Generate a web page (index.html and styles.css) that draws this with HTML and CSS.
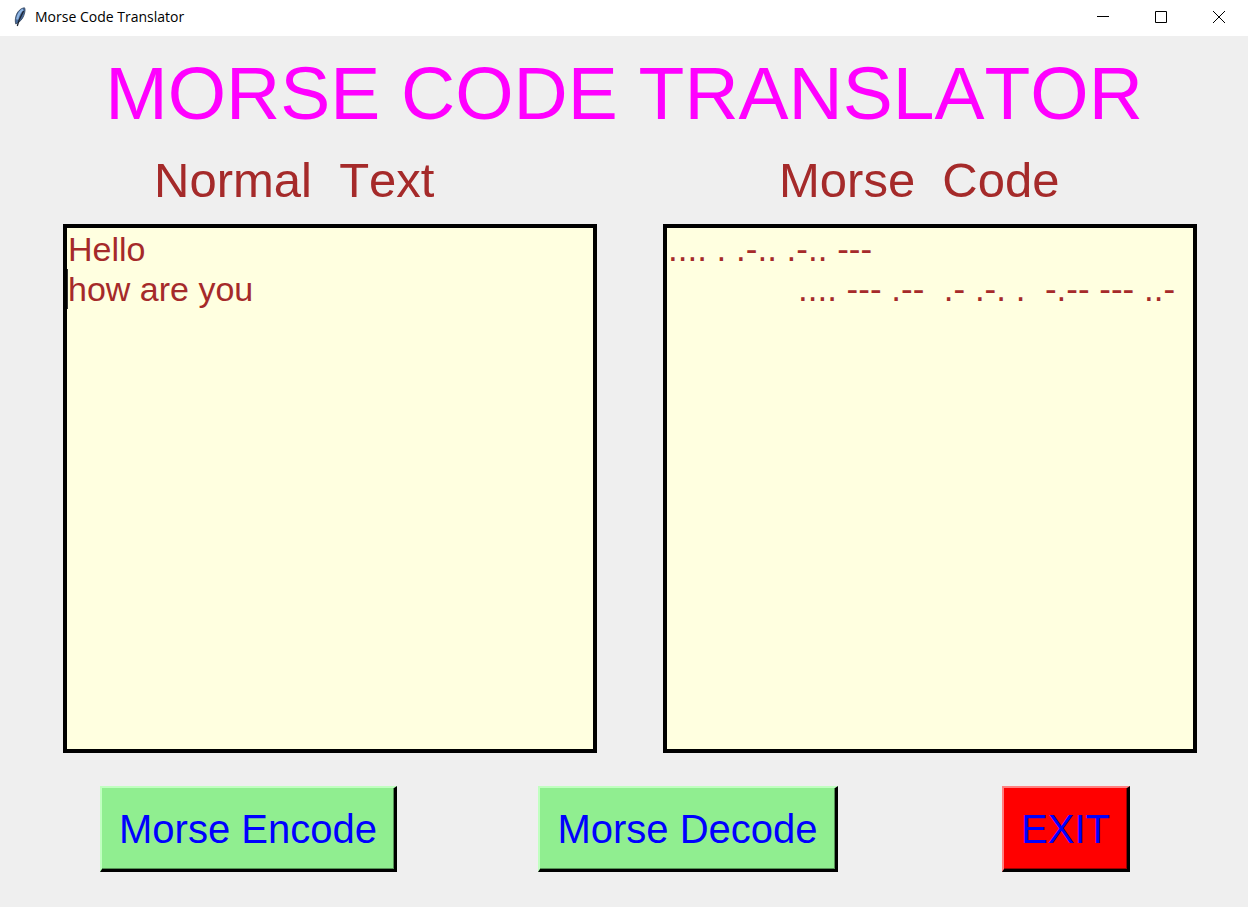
FILE: index.html
```html
<!DOCTYPE html>
<html lang="en">
<head>
<meta charset="utf-8">
<title>Morse Code Translator</title>
<link rel="stylesheet" href="styles.css">
</head>
<body>
<header class="titlebar">
  <svg class="app-icon" viewBox="0 0 14 20" aria-hidden="true">
    <path d="M11.500 .8C8 1 4.200 4.500 3 9C2.200 12 2 14.500 2.800 17L5.500 15.500C9 13 10.800 9.500 11.600 6C12.200 3.500 12.200 2 11.500 .8Z" fill="#47699a" stroke="#2f4058" stroke-width="0.8"/>
    <path d="M10 2.500C7 4.500 5 8 4.200 12.500" fill="none" stroke="#8fb5e2" stroke-width="2.200"/>
    <path d="M10.600 4C8.500 8 5.800 12 4.300 19" fill="none" stroke="#1d2430" stroke-width="1.200"/>
  </svg>
  <span class="window-title">Morse Code Translator</span>
  <button class="window-button" type="button" aria-label="Minimize"><svg viewBox="0 0 12 12"><path d="M0 5.500H12"/></svg></button>
  <button class="window-button" type="button" aria-label="Maximize"><svg viewBox="0 0 12 12"><path d="M.5 .5H11.500V11.500H.5Z"/></svg></button>
  <button class="window-button" type="button" aria-label="Close"><svg viewBox="0 0 12 12"><path d="M0 0L12 12M12 0L0 12"/></svg></button>
</header>
<main class="content">
  <h1 class="heading">MORSE CODE TRANSLATOR</h1>
  <div class="panels">
    <section class="panel">
      <label class="panel-label label-normal" for="normal">Normal  Text</label>
      <div class="field">
        <textarea class="box" id="normal" spellcheck="false">Hello
how are you</textarea>
        <span class="caret"></span>
      </div>
    </section>
    <section class="panel">
      <label class="panel-label label-morse" for="morse">Morse  Code</label>
      <div class="field">
        <textarea class="box box-morse" id="morse" spellcheck="false">.... . .-.. .-.. ---
&#9;.... --- .--  .- .-. .  -.-- --- ..-</textarea>
      </div>
    </section>
  </div>
  <div class="actions">
    <button class="action" type="button">Morse Encode</button>
    <span></span>
    <button class="action" type="button">Morse Decode</button>
    <span></span>
    <button class="action action-exit" type="button">EXIT</button>
  </div>
</main>
</body>
</html>
```
FILE: styles.css
```css
* { box-sizing: border-box; }

body {
  margin: 0;
  min-height: 100vh;
  display: flex;
  flex-direction: column;
  background: #efefef;
  font-family: "Liberation Sans", Arial, sans-serif;
  font-kerning: none;
}

.titlebar {
  display: flex;
  align-items: center;
  height: 36px;
  padding: 0 0 2px 13px;
  background: #fff;
}

.app-icon { width: 14px; height: 20px; }

.window-title {
  flex: 1;
  margin-left: 8px;
  padding-bottom: 2px;
  font: 14px "Open Sans", "Noto Sans", sans-serif;
  color: #000;
}

.window-button {
  display: flex;
  align-items: center;
  justify-content: center;
  width: 58px;
  height: 34px;
  padding: 0;
  border: 0;
  background: none;
}

.window-button svg {
  width: 12px;
  height: 12px;
  fill: none;
  stroke: #000;
  stroke-width: 1;
}

.content {
  flex: 1;
  display: flex;
  flex-direction: column;
}

.heading {
  margin: 0;
  padding-top: 14px;
  font-size: 75px;
  font-weight: 400;
  line-height: 86px;
  text-align: center;
  color: #f0f;
}

.panels {
  flex: 1;
  display: grid;
  grid-template-columns: 1fr 1fr;
  gap: 66px;
  padding: 16px 51px 0 63px;
}

.panel {
  display: flex;
  flex-direction: column;
}

.panel-label {
  font-size: 49px;
  line-height: 56px;
  margin-bottom: 16px;
  white-space: pre;
  color: #a52a2a;
}

.label-normal { padding-left: 91px; }
.label-morse { padding-left: 116px; }

.field {
  position: relative;
  flex: 1;
  display: flex;
}

.box {
  flex: 1;
  min-width: 0;
  margin: 0;
  padding: 1px;
  border: 4px solid #000;
  border-radius: 0;
  outline: 0;
  resize: none;
  overflow: hidden;
  background: #ffffe0;
  color: #a52a2a;
  font: 34px/40px "Liberation Sans", Arial, sans-serif;
}

.box-morse {
  font-size: 35px;
  tab-size: 130px;
}

.caret {
  position: absolute;
  left: 4px;
  top: 45px;
  width: 1px;
  height: 40px;
  background: #333;
}

.actions {
  display: grid;
  grid-template-columns: auto 141fr auto 164fr auto;
  padding: 33px 118px 35px 100px;
}

.action {
  height: 86px;
  padding: 2px 17px 0;
  border: solid;
  border-color: #c0ffc0 #000 #000 #c0ffc0;
  border-width: 2px 3px 3px 2px;
  border-radius: 0;
  background: #90ee90;
  box-shadow: inset -1px -1px #569056;
  color: #00f;
  font: 40px "Liberation Sans", Arial, sans-serif;
}

.action-exit {
  border-color: #ff8080 #000 #000 #ff8080;
  background: #f00;
  box-shadow: inset -1px -1px #990000;
}
```
